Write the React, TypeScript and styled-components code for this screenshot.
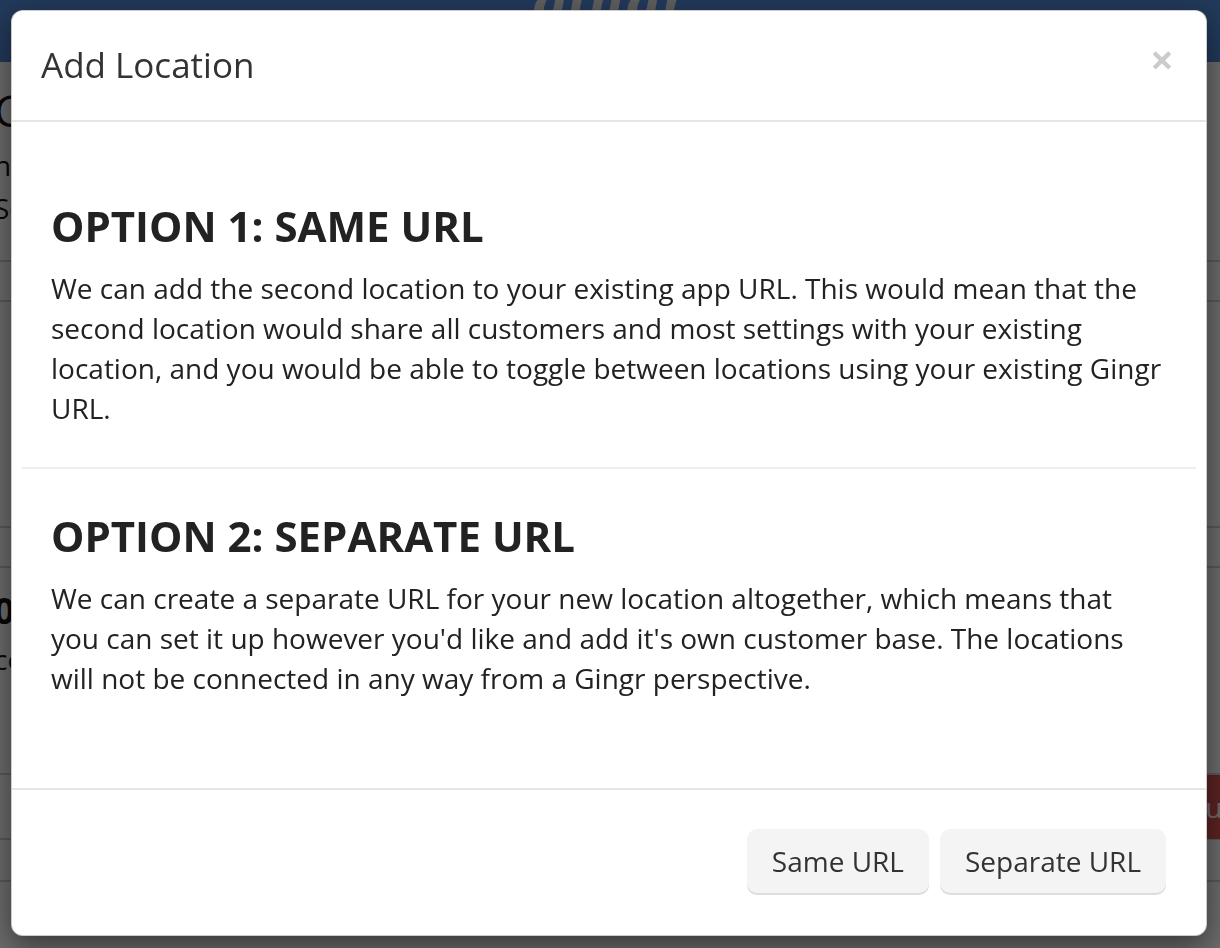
import React from "react";
import styled, { createGlobalStyle } from "styled-components";

const Global = createGlobalStyle`
  html, body { margin: 0; padding: 0; }
  body {
    width: 1220px;
    height: 948px;
    overflow: hidden;
    font-family: "Open Sans", "DejaVu Sans", sans-serif;
    background: #ffffff;
  }
  * { box-sizing: border-box; }
`;

/* ---------- background page ---------- */
const Page = styled.div`
  width: 1220px;
  height: 948px;
  background: #ffffff;
  overflow: hidden;
  display: flex;
  flex-direction: column;
`;

const NavBar = styled.div`
  height: 62px;
  flex: none;
  background: #5188d6;
  display: flex;
  justify-content: center;
  overflow: hidden;
`;

const Logo = styled.div`
  font-family: "DejaVu Serif", serif;
  font-style: italic;
  font-weight: 700;
  font-size: 50px;
  line-height: 1;
  color: #e0e0e0;
  margin-top: -24px;
  letter-spacing: 1px;
`;

const BgRow = styled.div<{ $h: number }>`
  height: ${(p) => p.$h}px;
  flex: none;
  border-bottom: 2px solid #d2d2d2;
  display: flex;
  justify-content: space-between;
  align-items: center;
`;

const BgBlock = styled.div<{ $h: number }>`
  height: ${(p) => p.$h}px;
  flex: none;
  border-bottom: 2px solid #d2d2d2;
  display: flex;
  flex-direction: column;
  padding-top: 18px;
  gap: 4px;
`;

const BgText = styled.div<{ $size: number; $bold?: boolean }>`
  font-size: ${(p) => p.$size}px;
  font-weight: ${(p) => (p.$bold ? 700 : 400)};
  line-height: 1.4;
  color: #111;
  margin-left: -6px;
`;

const DangerButton = styled.div`
  margin-left: auto;
  margin-right: -80px;
  height: 64px;
  width: 110px;
  background: #d9534f;
  border-radius: 8px;
  color: #ffffff;
  font-size: 28px;
  display: flex;
  align-items: center;
  padding-left: 0px;
`;

/* ---------- modal ---------- */
const Overlay = styled.div`
  position: fixed;
  inset: 0;
  background: rgba(0, 0, 0, 0.58);
  overflow: hidden;
`;

const Dialog = styled.div`
  margin: 10px 13px 0 11px;
  background: #ffffff;
  border-radius: 12px;
  border: 1px solid rgba(0, 0, 0, 0.2);
  box-shadow: 0 10px 30px rgba(0, 0, 0, 0.5);
  display: flex;
  flex-direction: column;
  overflow: hidden;
`;

const Header = styled.div`
  display: flex;
  justify-content: space-between;
  align-items: flex-start;
  padding: 28px 30px 30px 29px;
  border-bottom: 2px solid #e5e5e5;
`;

const Title = styled.h4`
  margin: 0;
  font-size: 35px;
  font-weight: 400;
  line-height: 51px;
  color: #333333;
`;

const Close = styled.button`
  border: none;
  background: transparent;
  padding: 0;
  margin: -1px 2px 0 0;
  font-family: "Open Sans", sans-serif;
  font-size: 42px;
  font-weight: 700;
  line-height: 1;
  color: #000;
  opacity: 0.2;
  text-shadow: 0 2px 0 #fff;
  cursor: pointer;
`;

const Body = styled.div`
  padding: 37px 10px 51px 10px;
`;

const Section = styled.section`
  padding: 44px 31px 39px 29px;
  & + & {
    border-top: 2px solid #eeeeee;
  }
`;

const Heading = styled.h3`
  margin: 0 0 19px 0;
  font-size: 42px;
  font-weight: 700;
  line-height: 1.1;
  color: #222222;
`;

const Text = styled.p`
  margin: 0;
  font-size: 28px;
  line-height: 40px;
  color: #222222;
`;

const Footer = styled.div`
  border-top: 2px solid #e5e5e5;
  padding: 39px 40px 42px 40px;
  display: flex;
  justify-content: flex-end;
  gap: 11px;
`;

const Button = styled.button`
  font-family: "Open Sans", sans-serif;
  font-size: 28px;
  line-height: 40px;
  color: #333333;
  background: #f4f4f4;
  border: none;
  border-radius: 10px;
  padding: 12px 25px;
  box-shadow: 0 2px 0 #dddddd;
  cursor: pointer;
`;

export default function App() {
  return (
    <>
      <Global />
      <Page>
        <NavBar>
          <Logo>gingr</Logo>
        </NavBar>
        <BgBlock $h={200}>
          <BgText $size={44}>Cl</BgText>
          <BgText $size={28}>nm</BgText>
          <BgText $size={28}>Se</BgText>
        </BgBlock>
        <BgRow $h={40} />
        <BgBlock $h={226} />
        <BgRow $h={40} />
        <BgBlock $h={207}>
          <BgText $size={36} $bold>
            01
          </BgText>
          <BgText $size={28}>co</BgText>
        </BgBlock>
        <BgRow $h={65}>
          <DangerButton>Submit</DangerButton>
        </BgRow>
        <BgRow $h={42} />
      </Page>
      <Overlay>
        <Dialog>
          <Header>
            <Title>Add Location</Title>
            <Close aria-label="Close">×</Close>
          </Header>
          <Body>
            <Section>
              <Heading>OPTION 1: SAME URL</Heading>
              <Text>
                We can add the second location to your existing app URL. This would mean that the
                second location would share all customers and most settings with your existing
                location, and you would be able to toggle between locations using your existing
                Gingr URL.
              </Text>
            </Section>
            <Section>
              <Heading>OPTION 2: SEPARATE URL</Heading>
              <Text>
                We can create a separate URL for your new location altogether, which means that
                you can set it up however you'd like and add it's own customer base. The locations
                will not be connected in any way from a Gingr perspective.
              </Text>
            </Section>
          </Body>
          <Footer>
            <Button>Same URL</Button>
            <Button>Separate URL</Button>
          </Footer>
        </Dialog>
      </Overlay>
    </>
  );
}
